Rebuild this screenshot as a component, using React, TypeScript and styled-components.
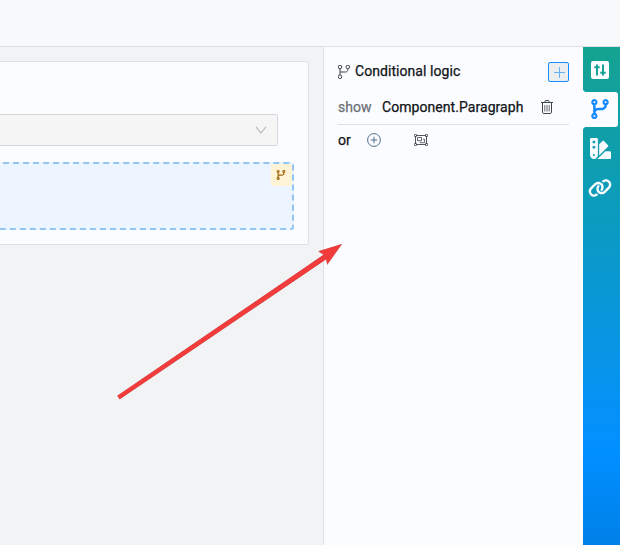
import React from "react";
import styled, { createGlobalStyle, css } from "styled-components";
import { FaCodeBranch, FaLink, FaSwatchbook } from "react-icons/fa6";

const GlobalStyle = createGlobalStyle`
  * { box-sizing: border-box; }
  body { margin: 0; overflow: hidden; background: #f1f3f5; font-family: Roboto, sans-serif; font-size: 14px; color: #111418; }
`;

const Page = styled.div`
  position: relative;
  display: flex;
  flex-direction: column;
  width: 620px;
  height: 545px;
  overflow: hidden;
`;
const Header = styled.header`
  flex: none;
  height: 47px;
  background: #f8f9fb;
  border-bottom: 1px solid #dee1e4;
`;
const Body = styled.div`
  display: flex;
  flex: 1;
  min-height: 0;
`;
const Canvas = styled.main`
  width: 323px;
  padding-top: 14px;
  background: #f1f3f5;
`;
const Card = styled.section`
  width: 309px;
  height: 184px;
  padding-top: 52px;
  background: #fbfcff;
  border: 1px solid #dee1e4;
  border-left: 0;
  border-radius: 0 3px 3px 0;
  overflow: hidden;
`;
const Select = styled.div`
  display: flex;
  align-items: center;
  justify-content: flex-end;
  width: 278px;
  height: 32px;
  padding-right: 10px;
  background: #f5f5f5;
  border: 1px solid #d6d7d9;
  border-left: 0;
  border-radius: 0 2px 2px 0;
`;
const Paragraph = styled.div`
  display: flex;
  justify-content: flex-end;
  align-items: flex-start;
  width: 314px;
  height: 68px;
  margin: 16px 0 0 -20px;
  background: #ecf5ff;
  border: 2px dashed #93c5f3;
  border-radius: 3px;
`;
const LogicTag = styled.span`
  display: flex;
  align-items: center;
  justify-content: center;
  width: 21px;
  height: 22px;
  padding-right: 1px;
  background: #fff3d6;
  color: #a06a10;
  border-radius: 0 0 0 2px;
`;
const Panel = styled.aside`
  width: 260px;
  padding: 15px 14px 0;
  background: #fbfcff;
  border-left: 1px solid #dee1e4;
`;
const Row = styled.div`
  display: flex;
  align-items: center;
  color: #3d454d;
`;
const TitleRow = styled(Row)`
  height: 20px;
  gap: 4px;
`;
const RuleRow = styled(Row)`
  height: 43px;
  padding-top: 8px;
  border-bottom: 1px solid #dee1e4;
`;
const OrRow = styled(Row)`
  height: 31px;
`;
const Label = styled.span<{ $muted?: boolean }>`
  font-weight: 400;
  letter-spacing: ${(p) => (p.$muted ? 0 : 0.06)}px;
  -webkit-text-stroke: 0.25px currentColor;
  color: ${(p) => (p.$muted ? "#6c7278" : "#111418")};
  line-height: 20px;
`;
const Title = styled(Label)`
  flex: 1;
  margin-bottom: 2px;
`;
const OrLabel = styled(Label)`
  margin-bottom: 2px;
`;
const Target = styled(Label)`
  width: 142px;
  margin: 0 17px 0 10.5px;
`;
const AddButton = styled.button`
  display: grid;
  place-items: center;
  width: 21px;
  height: 20px;
  padding: 0;
  color: #62b0f5;
  background: #ebedef;
  border: 1px solid #168dff;
  border-radius: 2px;
`;
const IconButton = styled.button<{ $gap?: number; $raise?: number }>`
  display: flex;
  margin: 0 0 ${(p) => p.$raise ?? 0}px ${(p) => p.$gap ?? 0}px;
  padding: 0;
  color: #3d454d;
  background: none;
  border: 0;
`;
const Rail = styled.nav`
  width: 37px;
  background: linear-gradient(180deg, #15a391 0%, #0d9db5 27%, #0490ff 79%, #008fff 82%, #0080e8 100%);
`;
const Tab = styled.button<{ $active?: boolean; $height: number; $raise?: number }>`
  position: relative;
  display: flex;
  align-items: center;
  justify-content: center;
  width: 35px;
  height: ${(p) => p.$height}px;
  padding: 0 1px ${(p) => p.$raise ?? 0}px 0;
  color: #fbfcff;
  background: none;
  border: 0;
  ${(p) =>
    p.$active &&
    css`
      color: #168bff;
      background: #fbfcff;
      border-radius: 0 3px 3px 0;
      &::before,
      &::after {
        content: "";
        position: absolute;
        left: 0;
        width: 3px;
        height: 3px;
      }
      &::before {
        top: -3px;
        background: radial-gradient(circle at 100% 0, transparent 2.6px, #fbfcff 3.2px);
      }
      &::after {
        bottom: -3px;
        background: radial-gradient(circle at 100% 100%, transparent 2.6px, #fbfcff 3.2px);
      }
    `}
`;
const Pointer = styled.svg`
  position: absolute;
  left: 110px;
  top: 236px;
  pointer-events: none;
  filter: drop-shadow(0 0.5px 0.5px rgba(60, 40, 40, 0.55));
`;

const BranchIcon = () => (
  <svg width="13" height="15" viewBox="0.5 0.5 13 15" fill="none" stroke="currentColor" strokeWidth="1">
    <circle cx="2.5" cy="2.5" r="1.8" />
    <circle cx="10.3" cy="2.5" r="1.8" />
    <circle cx="2.5" cy="12.2" r="1.8" />
    <path d="M2.5 4.3v6.1M10.3 4.3v.9c0 1.4-1 2.3-2.3 2.3H2.5" />
  </svg>
);
const TrashIcon = () => (
  <svg width="12" height="14" viewBox="0 0 12 14" fill="none" stroke="currentColor" strokeWidth="1">
    <path d="M0 2.5h12M3.5 2.5l1-2h3l1 2M1.5 2.5v9.6c0 .8.5 1.4 1.3 1.4h6.4c.8 0 1.3-.6 1.3-1.4V2.5" />
    <path d="M3.8 5v6.5M6 5v6.5M8.2 5v6.5" strokeWidth=".8" />
  </svg>
);
const PlusCircleIcon = () => (
  <svg width="14" height="14" viewBox="0 0 14 14" fill="none" stroke="#4f6e88" strokeWidth="1">
    <circle cx="7" cy="7" r="6.4" />
    <path d="M7 3.8v6.4M3.8 7h6.4" />
  </svg>
);
const GroupIcon = () => (
  <svg width="14" height="12" viewBox="0 0 14 12" fill="none" stroke="currentColor" strokeWidth="1">
    <path d="M1.5 2v8M12.5 2v8M2 1.5h10M2 10.5h10" strokeWidth=".9" />
    <path d="M.5.5h2v2h-2zM11.5.5h2v2h-2zM.5 9.5h2v2h-2zM11.5 9.5h2v2h-2z" strokeWidth=".7" />
    <path d="M3.5 3.5h4v3.2h-4zM9 5.3h1.6v3.4H6.2V7.8" strokeWidth=".8" />
  </svg>
);
const SlidersIcon = () => (
  <svg width="18" height="18" viewBox="0 0 18 18">
    <rect width="18" height="18" rx="2" fill="currentColor" />
    <path d="M6 3.5v11M12 3.5v11M3.3 6.2h5.4M9.3 11.7h5.4" fill="none" stroke="#14a196" strokeWidth="2" />
  </svg>
);

export default function App() {
  return (
    <Page>
      <GlobalStyle />
      <Header />
      <Body>
        <Canvas>
          <Card>
            <Select>
              <svg width="12" height="9" viewBox="0 0 12 9" fill="none" stroke="#b9bbbd" strokeWidth="1.2">
                <path d="M1 .8l5 6.3 5-6.3" />
              </svg>
            </Select>
            <Paragraph>
              <LogicTag>
                <FaCodeBranch size={10} />
              </LogicTag>
            </Paragraph>
          </Card>
        </Canvas>
        <Panel>
          <TitleRow>
            <BranchIcon />
            <Title>Conditional logic</Title>
            <AddButton aria-label="Add">
              <svg width="12" height="12" viewBox="0 0 12 12" stroke="currentColor" strokeWidth="1">
                <path d="M6.5 1v11M1 6.5h11" />
              </svg>
            </AddButton>
          </TitleRow>
          <RuleRow>
            <Label $muted>show</Label>
            <Target>Component.Paragraph</Target>
            <IconButton aria-label="Delete">
              <TrashIcon />
            </IconButton>
          </RuleRow>
          <OrRow>
            <OrLabel>or</OrLabel>
            <IconButton $gap={16} $raise={2} aria-label="Add rule">
              <PlusCircleIcon />
            </IconButton>
            <IconButton $gap={33} $raise={2} aria-label="Add group">
              <GroupIcon />
            </IconButton>
          </OrRow>
        </Panel>
        <Rail>
          <Tab $height={45} aria-label="Settings">
            <SlidersIcon />
          </Tab>
          <Tab $height={35} $active $raise={2} aria-label="Conditional logic">
            <FaCodeBranch size={20} />
          </Tab>
          <Tab $height={43} aria-label="Design">
            <FaSwatchbook size={21} />
          </Tab>
          <Tab $height={35} aria-label="Links">
            <FaLink size={24} />
          </Tab>
        </Rail>
      </Body>
      <Pointer width="240" height="170" viewBox="110 236 240 170" fill="#f23c3c">
        <path d="M117.3 395.7L323.6 254.8L318.3 251.3L342 244L327.2 264.7L326.2 259.2L119.7 399.2Z" />
      </Pointer>
    </Page>
  );
}
